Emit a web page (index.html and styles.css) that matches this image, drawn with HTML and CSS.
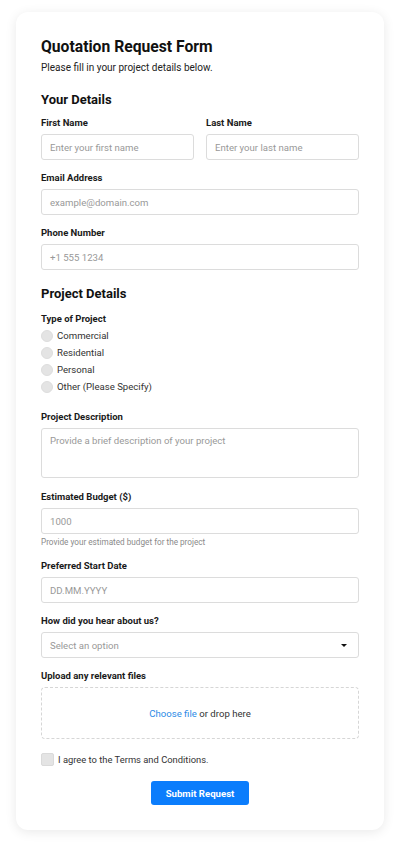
FILE: index.html
```html
<!DOCTYPE html>
<html lang="en">
<head>
<meta charset="utf-8">
<title>Quotation Request Form</title>
<link rel="stylesheet" href="styles.css">
</head>
<body>
<main class="card">
  <h1 class="title">Quotation Request Form</h1>
  <p class="subtitle">Please fill in your project details below.</p>

  <h2 class="section first-section">Your Details</h2>
  <div class="row2">
    <div class="field">
      <label class="label">First Name</label>
      <div class="input">Enter your first name</div>
    </div>
    <div class="field">
      <label class="label">Last Name</label>
      <div class="input">Enter your last name</div>
    </div>
  </div>
  <div class="field after-row">
    <label class="label">Email Address</label>
    <div class="input">example@domain.com</div>
  </div>
  <div class="field">
    <label class="label">Phone Number</label>
    <div class="input">+1 555 1234</div>
  </div>

  <h2 class="section">Project Details</h2>
  <div class="field lead">
    <label class="label">Type of Project</label>
    <div class="radios">
      <div class="radio"><span class="dot"></span>Commercial</div>
      <div class="radio"><span class="dot"></span>Residential</div>
      <div class="radio"><span class="dot"></span>Personal</div>
      <div class="radio"><span class="dot"></span>Other (Please Specify)</div>
    </div>
  </div>
  <div class="field after-radios">
    <label class="label">Project Description</label>
    <div class="input textarea">Provide a brief description of your project</div>
  </div>
  <div class="field after-textarea">
    <label class="label">Estimated Budget ($)</label>
    <div class="input">1000</div>
    <p class="help">Provide your estimated budget for the project</p>
  </div>
  <div class="field after-help">
    <label class="label">Preferred Start Date</label>
    <div class="input">DD.MM.YYYY</div>
  </div>
  <div class="field">
    <label class="label">How did you hear about us?</label>
    <div class="input select">Select an option<span class="caret"></span></div>
  </div>
  <div class="field">
    <label class="label">Upload any relevant files</label>
    <div class="drop"><span class="link">Choose file</span>&nbsp;or drop here</div>
  </div>
  <div class="check"><span class="box"></span>I agree to the Terms and Conditions.</div>
  <div class="actions"><button class="btn">Submit Request</button></div>
</main>
</body>
</html>
```

FILE: styles.css
```css
* { box-sizing: border-box; }
html, body { margin: 0; padding: 0; background: #ffffff; }
body {
  font-family: Roboto, "Noto Sans", sans-serif;
  color: #222;
  padding: 12px 16px 12px;
}
.card {
  background: #fff;
  border-radius: 12px;
  box-shadow: 0 2px 12px rgba(0,0,0,0.09);
  padding: 25px 25px 25px;
  display: flex;
  flex-direction: column;
}
.title {
  margin: 0;
  font-size: 15.7px;
  line-height: 20px;
  font-weight: 700;
  color: #111;
}
.subtitle {
  margin: 4px 0 0;
  font-size: 10px;
  line-height: 14px;
  color: #222;
}
.section {
  margin: 15px 0 0;
  font-size: 13px;
  line-height: 18px;
  font-weight: 700;
  color: #111;
}
.first-section { margin-top: 16px; }
.row2 {
  display: grid;
  grid-template-columns: 1fr 1fr;
  gap: 12px;
}
.field {
  display: flex;
  flex-direction: column;
  margin-top: 11px;
}
.row2 .field { margin-top: 7px; }
.field.lead { margin-top: 9px; }
.field.after-row { margin-top: 11px; }
.field.after-radios { margin-top: 15px; }
.field.after-textarea { margin-top: 12px; }
.field.after-help { margin-top: 12px; }
.label {
  font-size: 9.5px;
  line-height: 14px;
  font-weight: 700;
  color: #1a1a1a;
  margin-bottom: 4px;
}
.input {
  height: 26px;
  border: 1px solid #dcdcdc;
  border-radius: 3px;
  padding: 0 8px;
  font-size: 9.6px;
  color: #999;
  display: flex;
  align-items: center;
}
.textarea {
  height: 50px;
  align-items: flex-start;
  padding-top: 6px;
}
.select { justify-content: space-between; }
.caret {
  width: 0; height: 0;
  border-left: 3px solid transparent;
  border-right: 3px solid transparent;
  border-top: 3px solid #111;
  margin-right: 3px;
}
.help {
  margin: 3px 0 0;
  font-size: 8.2px;
  line-height: 10px;
  color: #8a8a8a;
}
.radios { display: flex; flex-direction: column; margin-top: -3px; }
.radio {
  height: 17px;
  display: flex;
  align-items: center;
  gap: 4px;
  font-size: 9.6px;
  color: #333;
}
.dot {
  width: 12px; height: 12px;
  border-radius: 50%;
  background: #e4e4e4;
  border: 1px solid #dddddd;
}
.drop {
  height: 52px;
  border: 1px dashed #d6d6d6;
  border-radius: 4px;
  display: flex;
  align-items: center;
  justify-content: center;
  font-size: 9.6px;
  color: #333;
}
.link { color: #2b8ae6; }
.check {
  margin-top: 14px;
  display: flex;
  align-items: center;
  gap: 4px;
  font-size: 9.4px;
  color: #333;
}
.box {
  width: 13px; height: 13px;
  border-radius: 2px;
  background: #e4e4e4;
  border: 1px solid #dadada;
}
.actions {
  display: flex;
  justify-content: center;
  margin-top: 15px;
}
.btn {
  width: 98px;
  height: 24px;
  border: 0;
  border-radius: 3px;
  background: #0b7dfc;
  color: #fff;
  font-family: inherit;
  font-size: 9.6px;
  font-weight: 700;
  padding: 0;
}
```
